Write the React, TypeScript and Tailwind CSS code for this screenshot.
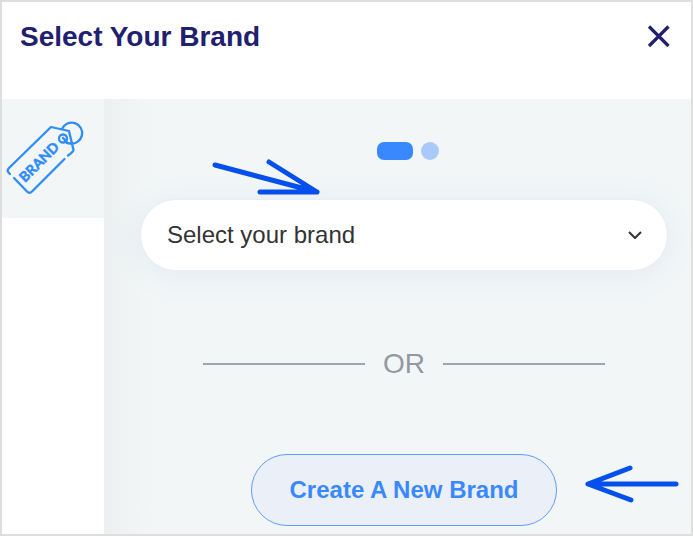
import React, { useState } from "react";

const BrandTag = () => (
  <svg
    viewBox="0 0 84 80"
    fill="none"
    stroke="#2f8cf8"
    strokeWidth="2.3"
    strokeLinecap="round"
    strokeLinejoin="round"
    className="w-[84px] h-20"
    role="img"
    aria-label="Brand"
  >
    <path d="M6 56 4.500 54.500Q2.500 52.500 5 50L47 9L65 13L69.500 32Q69.500 33.500 64 37.500" />
    <path d="M10 60 23 73.500Q25.500 76 28 73.500L60.500 41" />
    <circle cx="59" cy="20.500" r="4" />
    <path d="M59 20 62.500 23.500" />
    <path d="M58 11A10.500 10.500 0 1 1 66 25.500C64 25.500 62 24.500 61 23" />
    <text
      transform="translate(21 65) rotate(-45)"
      fill="#2f8cf8"
      strokeWidth="0.5"
      fontSize="14"
      fontWeight="700"
      fontFamily="Lato, sans-serif"
    >
      BRAND
    </text>
  </svg>
);

const Header = ({ onClose }: { onClose: () => void }) => (
  <header className="flex items-start justify-between h-[97px] pl-[18px] pr-5 pt-4 bg-white text-[#20206f]">
    <h1 className="text-[28px] leading-[38px] font-bold">Select Your Brand</h1>
    <button type="button" aria-label="Close" onClick={onClose} className="mt-1.5">
      <svg
        viewBox="0 0 24 24"
        className="w-6 h-6"
        fill="none"
        stroke="currentColor"
        strokeWidth="3.2"
      >
        <path d="M2 2.500 21.500 22M21.500 2.500 2 22" />
      </svg>
    </button>
  </header>
);

const App = () => {
  const [isOpen, setIsOpen] = useState(true);
  const [brand, setBrand] = useState("");

  if (!isOpen) return null;

  return (
    <div className="border-2 border-[#dededf] bg-white font-['Liberation_Sans',Arial,sans-serif]">
      <Header onClose={() => setIsOpen(false)} />
      <div className="flex">
        <aside className="w-[102px] shrink-0">
          <div className="h-[119px] bg-[#f2f6f7] pt-[19px] pl-0.5">
            <BrandTag />
          </div>
        </aside>
        <main className="relative flex-1 flex flex-col items-center bg-[#f2f6f7] bg-linear-to-r from-[#ecf0f1] to-[#f2f6f7] to-8% pt-[43px] pl-9 pr-[23px] pb-2">
          <div className="flex gap-2 pl-2">
            <span className="w-9 h-[18px] rounded-[7px] bg-[#3a88fd]" />
            <span className="w-[18px] h-[18px] rounded-full bg-[#a8c9fa]" />
          </div>
          <div className="relative w-full mt-[39px]">
            <select
              aria-label="Brand"
              value={brand}
              onChange={(e) => setBrand(e.target.value)}
              className="appearance-none w-full h-[72px] px-[26px] rounded-full border border-[#e8eef7] bg-white text-2xl text-[#333] shadow-[0_4px_32px_rgba(80,120,170,0.09)]"
            >
              <option value="">Select your brand</option>
            </select>
            <svg
              viewBox="0 0 14 8"
              className="absolute right-[26px] top-8 w-[14px] h-2 pointer-events-none"
              fill="none"
              stroke="#333"
              strokeWidth="2"
            >
              <path d="M1 1 7 7 13 1" />
            </svg>
          </div>
          <div className="flex items-center self-stretch gap-[18px] px-[63px] mt-[75px] text-[28px] leading-9 text-[#9299a3]">
            <span className="flex-1 h-0.5 bg-[#a0a5b1]" />
            OR
            <span className="flex-1 h-0.5 bg-[#a0a5b1]" />
          </div>
          <button
            type="button"
            className="mt-[72px] h-[72px] px-[38px] rounded-full border border-[#5e9dfb] bg-[#ebf0f8] text-2xl font-bold text-[#3a88fd]"
          >
            Create A New Brand
          </button>
          <svg
            viewBox="0 0 108 36"
            className="absolute left-[108px] top-[60px] w-[108px] h-9 pointer-events-none"
            fill="none"
            stroke="#0550ec"
            strokeWidth="5"
            strokeLinecap="round"
            strokeLinejoin="round"
          >
            <path d="M3 6 105 33M57 3 105 33 48 33" />
          </svg>
          <svg
            viewBox="0 0 94 38"
            className="absolute right-3 bottom-[31px] w-[94px] h-[38px] pointer-events-none"
            fill="none"
            stroke="#0550ec"
            strokeWidth="5"
            strokeLinecap="round"
            strokeLinejoin="round"
          >
            <path d="M91 19H3M45 3 3 19 46 35" />
          </svg>
        </main>
      </div>
    </div>
  );
};

export default App;
